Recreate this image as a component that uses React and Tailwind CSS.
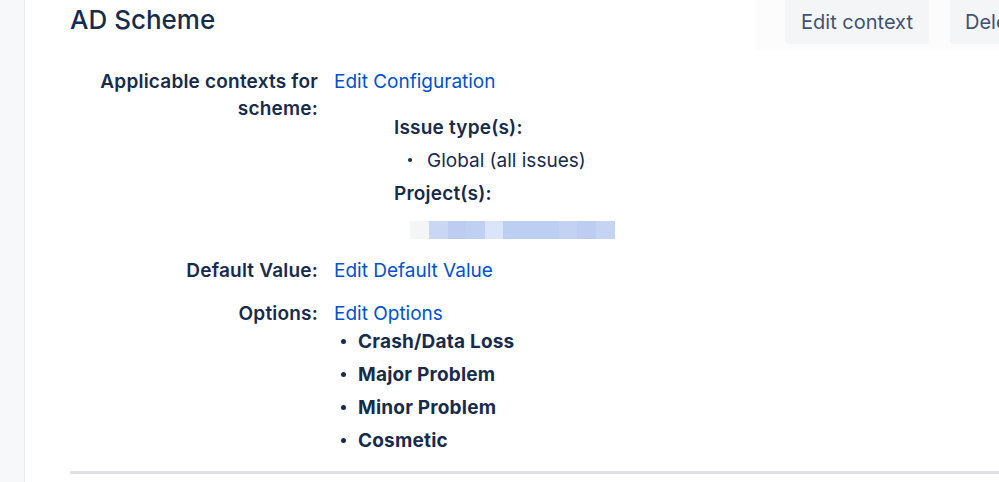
import React from 'react';

const options = ['Crash/Data Loss', 'Major Problem', 'Minor Problem', 'Cosmetic'];

function Label({ children }) {
  return (
    <div className="w-[248px] shrink-0 text-right font-semibold leading-[27px] tracking-[0.2px] text-[#172b4d]">
      {children}
    </div>
  );
}

export default function App() {
  return (
    <div
      className="flex h-[482px] w-[999px] overflow-hidden bg-white text-[19px] text-[#172b4d]"
      style={{ fontFamily: 'Inter, "Noto Sans", sans-serif' }}
    >
      <div className="w-[25px] shrink-0 border-r border-[#ebecf0] bg-[#f7f8f9]" />

      <div className="w-[1035px] shrink-0 pl-[45px]">
        <div className="flex items-start justify-between">
          <h1 className="pt-[3px] text-[26px] font-medium leading-[34px] text-[#172b4d]">AD Scheme</h1>
          <div className="flex shrink-0 gap-[21px] bg-[#fcfcfd] pb-[6px] pl-[30px]">
            <button className="h-[44px] w-[144px] rounded-b-[4px] bg-[#f4f5f7] text-[20px] text-[#42526e]">
              Edit context
            </button>
            <button className="h-[44px] w-[110px] rounded-b-[4px] bg-[#f4f5f7] px-[15px] text-left text-[20px] text-[#42526e]">
              Delete
            </button>
          </div>
        </div>

        <div className="mt-[18px] flex gap-4">
          <Label>
            Applicable contexts for
            <br />
            scheme:
          </Label>
          <div className="leading-[27px]">
            <a className="text-[#0052cc]">Edit Configuration</a>
            <div className="mt-[19px] pl-[60px]">
              <div className="font-semibold tracking-[0.2px]">Issue type(s):</div>
              <ul className="mt-[6px] pl-[14px]">
                <li className="relative pl-[19px] font-normal">
                  <span className="absolute left-0 top-[11px] h-[4px] w-[4px] rounded-full bg-[#172b4d]" />
                  Global (all issues)
                </li>
              </ul>
              <div className="mt-[6px] font-semibold tracking-[0.2px]">Project(s):</div>
              <div className="ml-[16px] mt-[14px] flex h-[18px] w-[205px]">
                <div className="w-[19px] bg-[#f4f5f7]" />
                <div className="w-[19px] bg-[#c9d6f4]" />
                <div className="w-[18px] bg-[#bccdf1]" />
                <div className="w-[19px] bg-[#c0d0f2]" />
                <div className="w-[18px] bg-[#dbe4f8]" />
                <div className="w-[56px] bg-[#bccef1]" />
                <div className="w-[18px] bg-[#c3d2f3]" />
                <div className="w-[19px] bg-[#bccdf1]" />
                <div className="w-[19px] bg-[#c5d4f3]" />
              </div>
            </div>
          </div>
        </div>

        <div className="mt-[18px] flex gap-4">
          <Label>Default Value:</Label>
          <a className="leading-[27px] text-[#0052cc]">Edit Default Value</a>
        </div>

        <div className="mt-[16px] flex gap-4">
          <Label>Options:</Label>
          <div className="leading-[27px]">
            <a className="text-[#0052cc]">Edit Options</a>
            <ul className="mt-[1px] flex flex-col gap-[6px] pl-[24px]">
              {options.map((o) => (
                <li key={o} className="relative font-bold tracking-[0.2px]">
                  <span className="absolute -left-[17px] top-[11px] h-[5px] w-[5px] rounded-full bg-[#172b4d]" />
                  {o}
                </li>
              ))}
            </ul>
          </div>
        </div>

        <div className="mt-[17px] h-[3px] bg-[#dfe1e6]" />
      </div>
    </div>
  );
}
